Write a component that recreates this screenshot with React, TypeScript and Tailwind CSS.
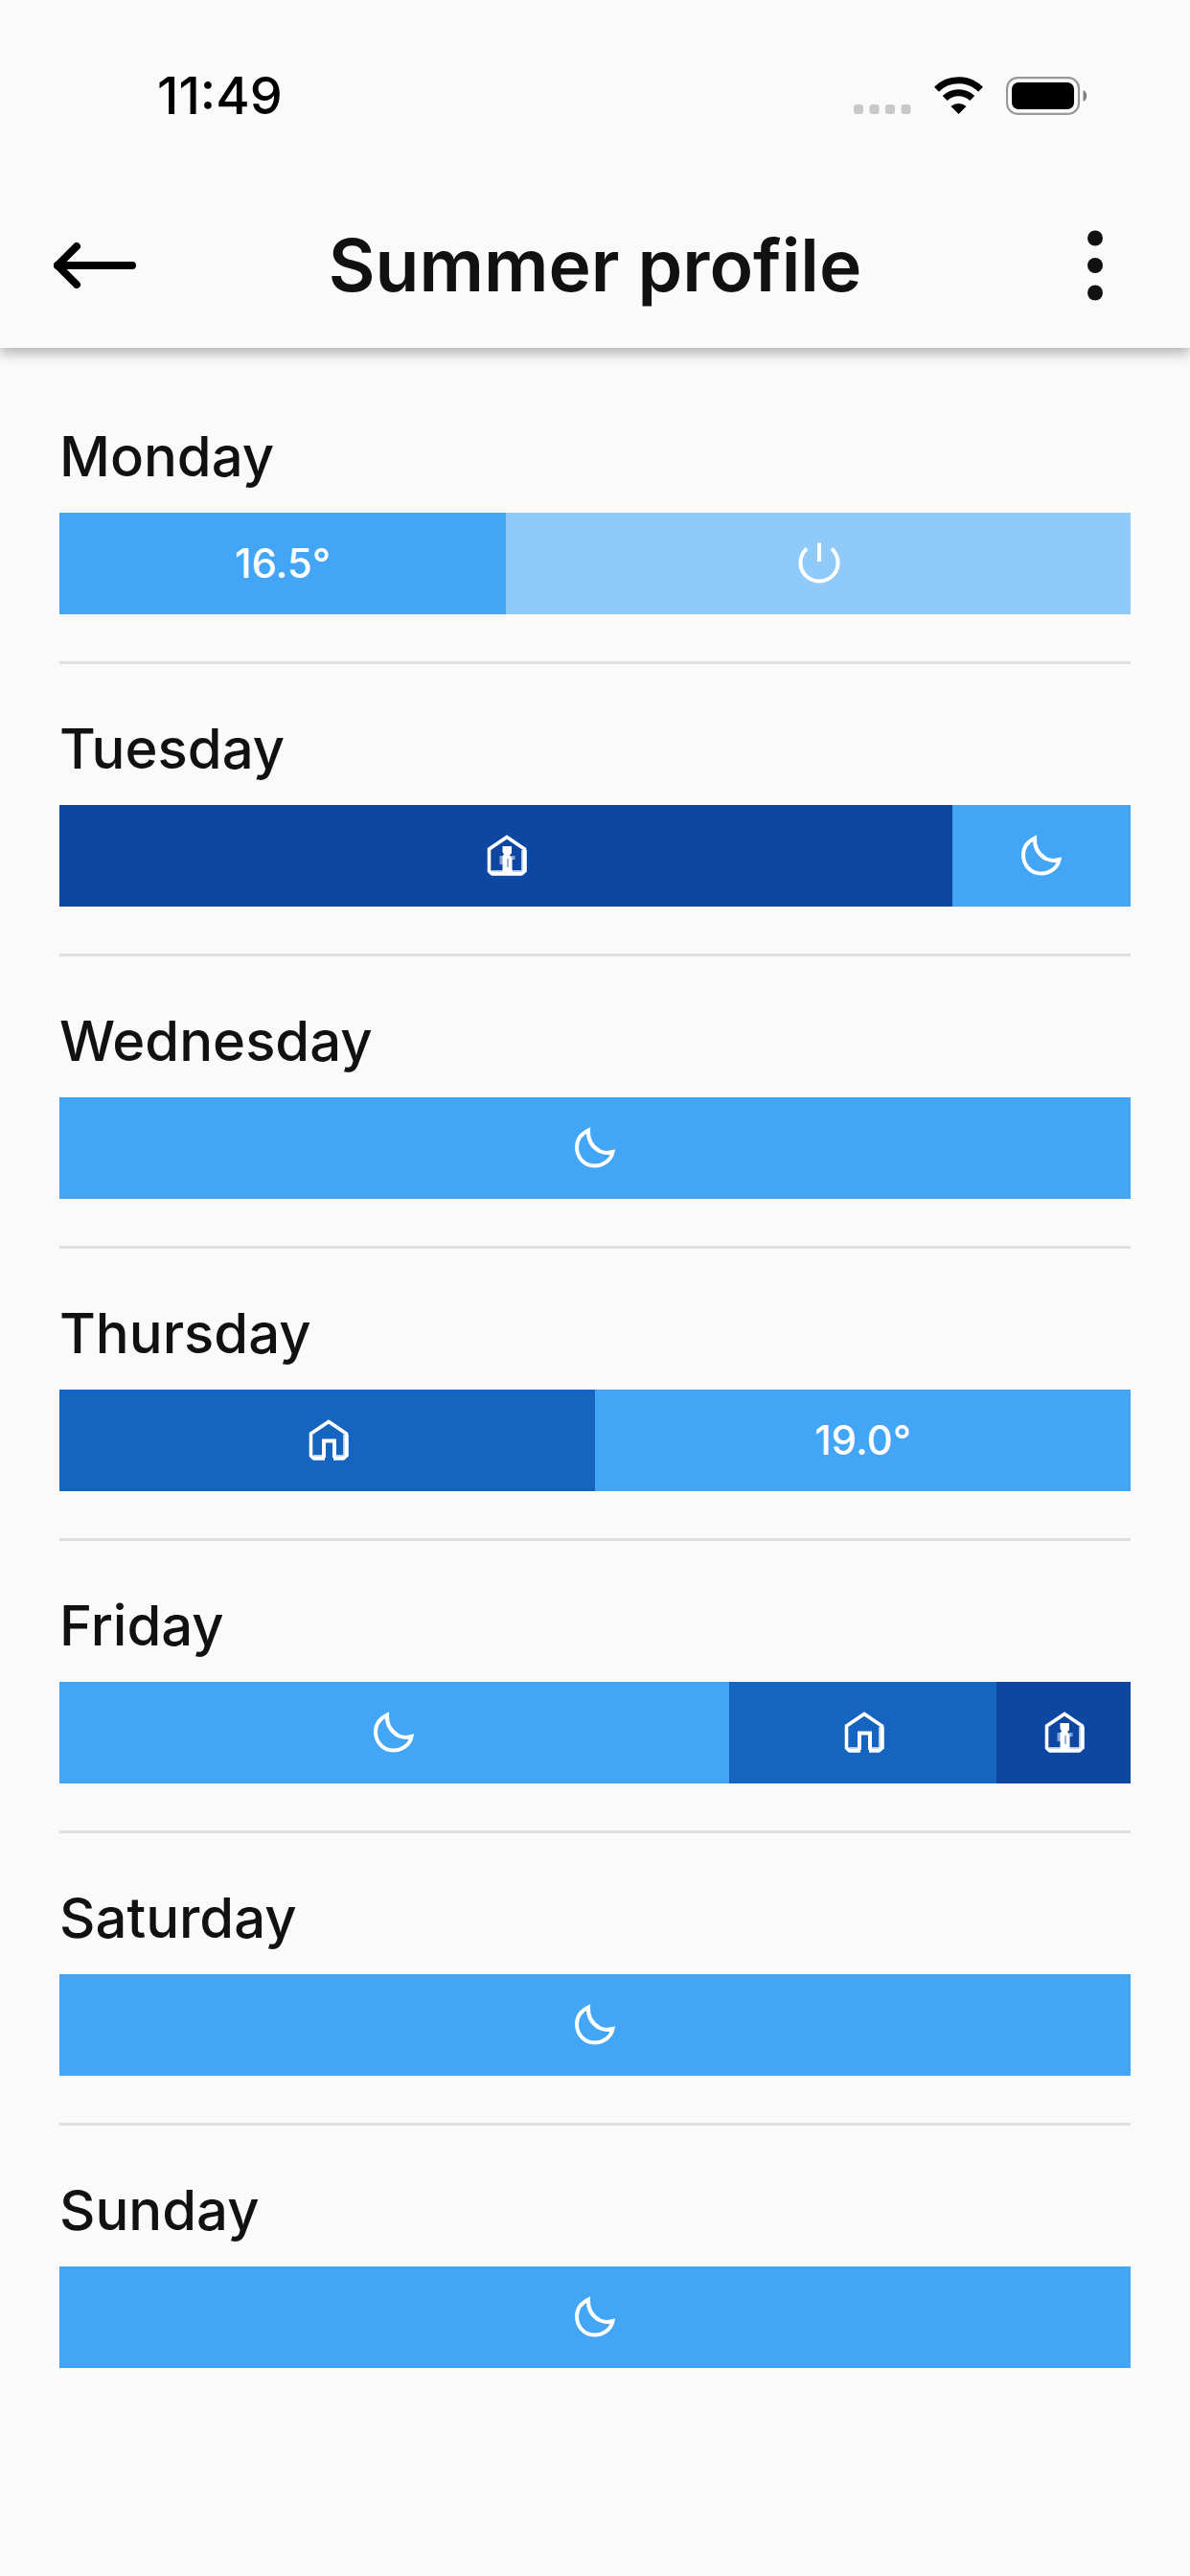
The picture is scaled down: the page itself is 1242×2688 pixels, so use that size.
import React from 'react';
import clsx from 'clsx';

type Mode = 'custom' | 'night' | 'home' | 'comfort' | 'off';

interface Slot {
  mode: Mode;
  hours: number;
  temperature?: string;
}

interface Day {
  name: string;
  slots: Slot[];
}

const days: Day[] = [
  {
    name: 'Monday',
    slots: [
      { mode: 'custom', hours: 10, temperature: '16.5°' },
      { mode: 'off', hours: 14 },
    ],
  },
  {
    name: 'Tuesday',
    slots: [
      { mode: 'comfort', hours: 20 },
      { mode: 'night', hours: 4 },
    ],
  },
  { name: 'Wednesday', slots: [{ mode: 'night', hours: 24 }] },
  {
    name: 'Thursday',
    slots: [
      { mode: 'home', hours: 12 },
      { mode: 'custom', hours: 12, temperature: '19.0°' },
    ],
  },
  {
    name: 'Friday',
    slots: [
      { mode: 'night', hours: 15 },
      { mode: 'home', hours: 6 },
      { mode: 'comfort', hours: 3 },
    ],
  },
  { name: 'Saturday', slots: [{ mode: 'night', hours: 24 }] },
  { name: 'Sunday', slots: [{ mode: 'night', hours: 24 }] },
];

const slotColors: Record<Mode, string> = {
  custom: 'bg-[#42a5f5]',
  night: 'bg-[#42a5f5]',
  home: 'bg-[#1565c0]',
  comfort: 'bg-[#0d47a1]',
  off: 'bg-[#90caf9]',
};

function MoonIcon() {
  return (
    <svg className="size-12" viewBox="0 0 48 48" fill="none" stroke="white" strokeWidth="4" role="img" aria-label="Night">
      <path d="M17 5.5C10 9 5 14 5 23c0 11 8 19.5 18.500 19.5C32 42.5 41 37 42.5 28c-5 1.500-10 1-14-1C20 22 16.5 15 17 5.5Z" />
    </svg>
  );
}

function PowerIcon() {
  return (
    <svg className="size-12" viewBox="0 0 48 48" fill="none" stroke="white" strokeWidth="4" role="img" aria-label="Off">
      <path d="M25 2.5V22" />
      <path d="M12 8.5C7 13 5.5 18 5.5 23.5a19.5 19 0 0 0 39 0C44.5 18 43 13 38 8.5" />
    </svg>
  );
}

function HomeIcon() {
  return (
    <svg className="size-12" viewBox="0 0 48 48" fill="none" stroke="white" role="img" aria-label="Home">
      <path d="M20 42V24.5H31V42" strokeWidth="4" />
      <path d="M21 42.5H9L6.5 40V17L25 4.5 43.5 17V40L41 42.5H30" strokeWidth="3.6" />
      <path d="M43 18V41M9 42H21M30 42H41" strokeWidth="6" opacity=".7" />
    </svg>
  );
}

function ComfortIcon() {
  return (
    <svg className="size-12" viewBox="0 0 48 48" fill="none" stroke="white" role="img" aria-label="Comfort">
      <path d="M9 42.5L6.5 40V17L25 4.5 43.5 17V40L41 42.5Z" strokeWidth="3.6" />
      <path d="M43 18V41M9 42H41" strokeWidth="6" opacity=".7" />
      <path d="M17.5 24H33.5V28H30V33H17.5Z" fill="white" stroke="none" opacity=".5" />
      <path d="M20.5 14H30V21L28 23.5 30.5 27V41H20.5V24L22 22.5 20.5 20Z" fill="white" stroke="none" />
      <path d="M26 27V36" stroke="#0d47a1" strokeWidth="2" opacity=".4" />
    </svg>
  );
}

function SlotContent({ slot }: { slot: Slot }) {
  switch (slot.mode) {
    case 'night':
      return <MoonIcon />;
    case 'off':
      return <PowerIcon />;
    case 'home':
      return <HomeIcon />;
    case 'comfort':
      return <ComfortIcon />;
    default:
      return <span>{slot.temperature}</span>;
  }
}

function StatusBar() {
  return (
    <div className="flex h-48 items-center justify-between pt-2 pr-[107px] pl-[164px] text-black">
      <time className="text-[54px] leading-[60px] font-medium">11:49</time>
      <div className="flex items-center gap-6">
        <svg className="h-10 w-[60px]" viewBox="0 0 60 40" fill="#c8c8c8" role="img" aria-label="No signal">
          <rect x="0" y="29" width="10" height="10" rx="3" />
          <rect x="16.5" y="29" width="10" height="10" rx="3" />
          <rect x="33" y="29" width="10" height="10" rx="3" />
          <rect x="49.5" y="29" width="10" height="10" rx="3" />
        </svg>
        <svg className="h-10 w-[51px]" viewBox="0 0 51 40" role="img" aria-label="Wi-Fi">
          <path d="M2.5 13.2A33 33 0 0 1 48.5 13.2" fill="none" stroke="black" strokeWidth="7" />
          <path d="M11.2 22.5A20.5 20.5 0 0 1 39.8 22.5" fill="none" stroke="black" strokeWidth="7" />
          <path d="M25.5 39L17.5 31A12 12 0 0 1 33.5 31Z" />
        </svg>
        <svg className="h-10 w-[85px]" viewBox="0 0 85 40" role="img" aria-label="Battery full">
          <rect x="1" y="1.2" width="75" height="37.6" rx="11" fill="none" stroke="#999" strokeWidth="2.2" />
          <rect x="6" y="6" width="65" height="28" rx="7" />
          <path d="M80.5 14C85.5 16 85.5 24 80.5 26Z" fill="#808080" />
        </svg>
      </div>
    </div>
  );
}

function Header({ title }: { title: string }) {
  return (
    <header className="relative bg-[#fafafa] shadow-[0_6px_12px_rgba(0,0,0,0.28)]">
      <StatusBar />
      <div className="grid h-[171px] grid-cols-[1fr_auto_1fr] items-center px-14 pb-0.5">
        <button type="button" aria-label="Back" className="justify-self-start">
          <svg className="h-12 w-[86px]" viewBox="0 0 86 48" fill="none" stroke="black" strokeWidth="8" strokeLinecap="round" strokeLinejoin="round">
            <path d="M4 24H82" />
            <path d="M24 4L4 24L24 44" />
          </svg>
        </button>
        <h1 className="text-[75px] leading-[80px] font-semibold">{title}</h1>
        <button type="button" aria-label="More options" className="justify-self-end px-[35px]">
          <svg className="h-20 w-4" viewBox="0 0 16 80" fill="#111">
            <circle cx="8" cy="11.5" r="8" />
            <circle cx="8" cy="40" r="8" />
            <circle cx="8" cy="68.5" r="8" />
          </svg>
        </button>
      </div>
    </header>
  );
}

function DayRow({ day }: { day: Day }) {
  return (
    <li className="border-b-[3px] border-[#e0e0e0] pt-[58px] pb-[49px] last:border-b-0">
      <h2 className="mb-[29px] text-[58px] leading-[60px] font-medium">{day.name}</h2>
      <div className="flex h-[106px] text-[42px] leading-[48px] font-medium text-white">
        {day.slots.map((slot, index) => (
          <div
            key={index}
            className={clsx('flex items-center justify-center', slotColors[slot.mode])}
            style={{ width: `${(slot.hours / 24) * 100}%` }}
          >
            <SlotContent slot={slot} />
          </div>
        ))}
      </div>
    </li>
  );
}

export default function App() {
  return (
    <div className="min-h-screen bg-[#fafafa] font-[Inter,'Liberation_Sans',sans-serif] text-[#111]">
      <Header title="Summer profile" />
      <main className="px-[62px] pt-[25px]">
        <ul>
          {days.map(day => (
            <DayRow key={day.name} day={day} />
          ))}
        </ul>
      </main>
    </div>
  );
}
